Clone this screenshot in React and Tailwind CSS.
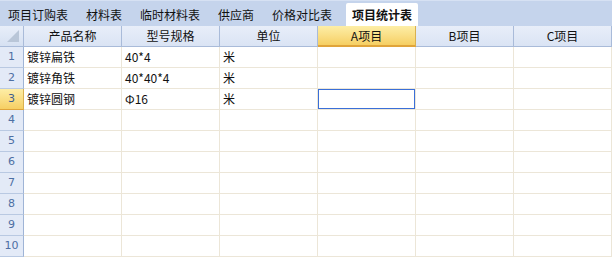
import React from "react";

const tabs = ["项目订购表", "材料表", "临时材料表", "供应商", "价格对比表"];
const cols = ["产品名称", "型号规格", "单位", "A项目", "B项目", "C项目"];
const data = [
  ["镀锌扁铁", "40*4", "米"],
  ["镀锌角铁", "40*40*4", "米"],
  ["镀锌圆钢", "Φ16", "米"],
];

export default function App() {
  const rows = Array.from({ length: 10 }, (_, i) => i + 1);
  return (
    <div
      className="w-[612px] h-[257px] overflow-hidden bg-white text-[12px] text-[#111]"
      style={{ fontFamily: '"Noto Sans CJK SC", "Liberation Sans", sans-serif' }}
    >
      <div className="h-[26px] flex items-end bg-[#c5d4ec] border-t border-[#d6e1f3] pl-[8px]">
        {tabs.map((t) => (
          <div key={t} className="h-[23px] flex items-center mr-[18px] leading-none">
            {t}
          </div>
        ))}
        <div className="h-[23px] -ml-[4px] px-[6px] bg-white flex items-center font-bold leading-none rounded-t-[2px]">
          项目统计表
        </div>
      </div>
      <div className="grid grid-cols-[24px_repeat(6,98px)]">
        <div className="h-[21px] bg-gradient-to-b from-[#e8eef9] to-[#d6e1f2] border-r border-b border-[#a9bbd9] flex items-end justify-end">
          <svg width="14" height="14" viewBox="0 0 14 14" className="mb-[3px] mr-[3px]">
            <polygon points="13,1 13,13 1,13" fill="#b9c6d8" />
          </svg>
        </div>
        {cols.map((c, i) => (
          <div
            key={c}
            className={
              i === 3
                ? "h-[21px] flex items-center justify-center border-r border-b-2 border-r-[#d9b150] border-b-[#e0a43a] bg-gradient-to-b from-[#fdeea6] to-[#f6cf62] leading-none"
                : "h-[21px] flex items-center justify-center border-r border-b border-[#a9bbd9] bg-gradient-to-b from-[#e8eef9] to-[#dae4f4] leading-none"
            }
          >
            {c}
          </div>
        ))}
        {rows.map((r) => (
          <React.Fragment key={r}>
            <div
              className={
                r === 3
                  ? "h-[21px] flex items-center justify-center border-r border-b border-r-[#d9b150] border-b-[#e0a43a] bg-gradient-to-b from-[#fdeea6] to-[#f6cf62] text-[11px] text-[#3d5e92]"
                  : "h-[21px] flex items-center justify-center border-r border-b border-r-[#9fb4d6] border-b-[#b9c9e2] bg-[#e3eaf7] text-[11px] text-[#4d6fa3]"
              }
              style={{ fontFamily: '"DejaVu Sans", sans-serif' }}
            >
              {r}
            </div>
            {cols.map((c, ci) => {
              const val = data[r - 1] ? data[r - 1][ci] || "" : "";
              const sel = r === 3 && ci === 3;
              return (
                <div
                  key={c}
                  className={
                    sel
                      ? "h-[21px] flex items-center pl-[3px] border-r border-b border-[#ece6d8] shadow-[inset_0_0_0_1px_#3a6fd8] leading-none"
                      : "h-[21px] flex items-center pl-[3px] border-r border-b border-[#ece6d8] leading-none"
                  }
                >
                  {val}
                </div>
              );
            })}
          </React.Fragment>
        ))}
      </div>
    </div>
  );
}
